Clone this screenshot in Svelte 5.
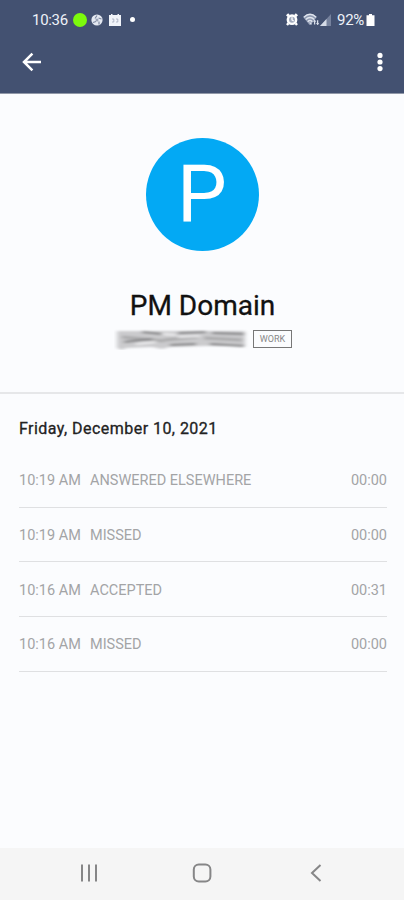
<script>
    const contact = {
        name: "PM Domain",
        initial: "P",
        label: "WORK"
    }

    const calls = [
        { id: 1, time: "10:19 AM", status: "ANSWERED ELSEWHERE", duration: "00:00" },
        { id: 2, time: "10:19 AM", status: "MISSED", duration: "00:00" },
        { id: 3, time: "10:16 AM", status: "ACCEPTED", duration: "00:31" },
        { id: 4, time: "10:16 AM", status: "MISSED", duration: "00:00" }
    ]
</script>

<div class="screen">
    <header class="header">
        <div class="status-bar">
            <div class="status-left">
                <span class="clock">10:36</span>
                <span class="green-dot"></span>
                <svg class="pinwheel" width="12" height="12" viewBox="0 0 12 12">
                    <circle cx="6" cy="6" r="5.6" fill="#e4e8f1" />
                    <path d="M6 1.5 4 4.5M10.5 5 7.5 4M8 10.5 8 7.5M2 8.5l3-1" stroke="#7c87a0" stroke-width="1.2" />
                    <circle cx="6" cy="6" r="1.5" fill="#9aa3b6" />
                </svg>
                <svg class="calendar" width="12" height="12" viewBox="0 0 12 12">
                    <path d="M0 1h2V0h1.5v1h5V0H10v1h2v11H0z" fill="#f1f4fa" />
                    <path d="M3 5h1.8v3H3M7 5h1.8v3H7" fill="none" stroke="#a3abbd" stroke-width=".8" />
                </svg>
                <span class="white-dot"></span>
            </div>
            <div class="status-right">
                <svg width="12" height="13" viewBox="0 0 12 13">
                    <path d="M.8 3.2 3 1.2M11.2 3.2 9 1.2M2.4 10.3 1 12M9.6 10.3 11 12" stroke="#fff" stroke-width="2.4" />
                    <circle cx="6" cy="6.7" r="4.2" fill="#9fa8bb" stroke="#fff" stroke-width="2.4" />
                    <path d="M6 4.2V7l1.7 1" fill="none" stroke="#fff" stroke-width="1.3" />
                </svg>
                <svg class="wifi" width="17" height="13" viewBox="0 0 17 13">
                    <path d="M.3 4.2Q7 -2.2 13.7 4.2L7.5 12h-1z" fill="#8d98b0" />
                    <path d="M.8 4.3Q7 -1.6 13.2 4.3M2.7 6.5Q7 2.4 11.3 6.5M4.7 8.7Q7 6.5 9.3 8.7" fill="none" stroke="#dfe4ee" stroke-width="1.4" />
                    <path d="M5.6 9.5h3L8.4 12z" fill="#d9dfeb" />
                    <path d="M11.6 7v4.5M14.6 11.8V7.3" stroke="#d9dfeb" stroke-width="1.3" />
                    <path d="m10 8.8 1.6-2 1.6 2zM13 10l1.6 2 1.6-2z" fill="#d9dfeb" />
                </svg>
                <svg class="signal" width="11" height="12" viewBox="0 0 11 12">
                    <path d="M0 12 11 0v12z" fill="#76829d" />
                    <path d="M0 12 6.5 5v7z" fill="#d5dbe7" />
                </svg>
                <span class="percent">92%</span>
                <svg class="battery" width="9" height="12" viewBox="0 0 9 12">
                    <path d="M3 0h3v1.2h2.5V12H.5V1.2H3z" fill="#fff" />
                </svg>
            </div>
        </div>
        <div class="toolbar">
            <svg width="20" height="20" viewBox="0 0 20 20">
                <path d="M10.4 1.6 2 10l8.4 8.4M2 10h17" fill="none" stroke="#fff" stroke-width="2.5" />
            </svg>
            <svg width="6" height="20" viewBox="0 0 6 20">
                <circle cx="3" cy="3.4" r="2.6" fill="#fff" />
                <circle cx="3" cy="10" r="2.6" fill="#fff" />
                <circle cx="3" cy="16.6" r="2.6" fill="#fff" />
            </svg>
        </div>
    </header>

    <section class="profile">
        <div class="avatar"><span class="initial">{contact.initial}</span></div>
        <h1 class="name">{contact.name}</h1>
        <div class="number-row">
            <!-- the phone number is smudged out -->
            <svg class="number" width="136" height="22" viewBox="0 0 136 22">
                <defs>
                    <filter id="smudge" x="-5%" y="-20%" width="110%" height="140%">
                        <feGaussianBlur stdDeviation="2 .9" />
                    </filter>
                </defs>
                <g filter="url(#smudge)">
                    <path d="M3 3h128v15H92l-36 1-8 2-10-2-26 1-4 2-5-2z" fill="#cbcbcd" />
                    <path d="M8 9l42 4M50 12l34-3M90 10l38 2" stroke="#aaaaac" stroke-width="3" />
                    <path d="M28 4l20 2M64 5l28-1M98 5l32 1M10 14l28-3M56 17l26-1M96 16l34 2" stroke="#7f7f81" stroke-width="2" />
                    <path d="M48 6l14 1M22 16l20-2M64 9l22-1" stroke="#eeeef0" stroke-width="2" />
                </g>
            </svg>
            <span class="label">{contact.label}</span>
        </div>
    </section>

    <section class="history">
        <h2 class="date">Friday, December 10, 2021</h2>
        <ul class="calls">
            {#each calls as call (call.id)}
                <li class="call">
                    <span class="time">{call.time}</span>
                    <span class="status">{call.status}</span>
                    <span class="duration">{call.duration}</span>
                </li>
            {/each}
        </ul>
    </section>

    <nav class="nav-bar">
        <svg width="20" height="20" viewBox="0 0 20 20">
            <path d="M3 1.5v17M10 1.5v17M17 1.5v17" stroke="#868687" stroke-width="2" />
        </svg>
        <svg width="20" height="20" viewBox="0 0 20 20">
            <rect x="1.8" y="1.6" width="16.6" height="16.8" rx="5" fill="none" stroke="#868687" stroke-width="2" />
        </svg>
        <svg width="20" height="20" viewBox="0 0 20 20">
            <path d="M14.5 2 6 10l8.5 8" fill="none" stroke="#868687" stroke-width="2" />
        </svg>
    </nav>
</div>

<style>
    :global(body) {
        margin: 0;
    }

    .screen {
        display: flex;
        flex-direction: column;
        width: 100%;
        height: 900px;
        overflow: hidden;
        background: #fbfcfe;
        font-family: Roboto, "Liberation Sans", sans-serif;
    }

    svg {
        display: block;
        flex: none;
    }

    .header {
        height: 94px;
        flex: none;
        background: #435171;
        border-bottom: 1px solid #9198a8;
        box-sizing: border-box;
        color: #eef1f8;
    }

    .status-bar {
        display: flex;
        justify-content: space-between;
        height: 39px;
        padding: 0 29px 0 32px;
    }

    .status-left,
    .status-right {
        display: flex;
        align-items: center;
    }

    .clock,
    .percent {
        font-size: 15px;
        line-height: 40px;
        padding-top: 1px;
    }

    .clock {
        width: 36px;
        letter-spacing: -0.3px;
    }

    .green-dot {
        width: 14px;
        height: 14px;
        margin-left: 5px;
        border-radius: 50%;
        background: #7cfa0c;
    }

    .pinwheel {
        margin-left: 4px;
    }

    .calendar {
        margin-left: 6px;
    }

    .white-dot {
        width: 5px;
        height: 5px;
        margin-left: 9px;
        border-radius: 50%;
        background: #fff;
    }

    .wifi {
        margin-left: 5px;
    }

    .percent {
        margin-left: 6px;
        width: 29px;
        letter-spacing: -0.3px;
    }

    .toolbar {
        display: flex;
        align-items: center;
        justify-content: space-between;
        height: 46px;
        padding: 0 21px 0 22px;
    }

    .profile {
        display: flex;
        flex-direction: column;
        align-items: center;
        height: 298px;
        padding-top: 44px;
        box-sizing: border-box;
        flex: none;
    }

    .avatar {
        display: flex;
        align-items: center;
        justify-content: center;
        width: 113px;
        height: 113px;
        border-radius: 50%;
        background: #03a9f4;
        color: #fff;
    }

    .initial {
        font-size: 79px;
        line-height: 113px;
    }

    .name {
        margin: 38px 0 0;
        font-size: 28px;
        font-weight: 400;
        line-height: 34px;
        padding-left: 1px;
        color: #111;
        -webkit-text-stroke: 0.3px #111;
    }

    .number-row {
        display: flex;
        align-items: center;
        gap: 3px;
        margin-top: 5px;
        padding-left: 2px;
    }

    .label {
        width: 39px;
        height: 18px;
        box-sizing: border-box;
        border: 1px solid #777;
        font-size: 9px;
        line-height: 16px;
        text-align: center;
        color: #888;
    }

    .history {
        flex: 1;
        border-top: 2px solid #e6e7e9;
        padding: 23px 17px 0 19px;
    }

    .date {
        margin: 0 0 12px;
        font-size: 16px;
        font-weight: 400;
        line-height: 24px;
        letter-spacing: 0.46px;
        color: #222;
        -webkit-text-stroke: 0.3px #222;
    }

    .calls {
        margin: 0;
        padding: 0;
        list-style: none;
    }

    .call {
        display: flex;
        align-items: center;
        height: 54.7px;
        padding-top: 2px;
        box-sizing: border-box;
        border-bottom: 1px solid #dfe0e2;
        font-size: 14.5px;
        color: #a3a4a6;
    }

    .time {
        width: 71px;
    }

    .duration {
        margin-left: auto;
    }

    .nav-bar {
        display: flex;
        align-items: center;
        justify-content: center;
        gap: 93.5px;
        height: 52px;
        padding: 0 0 3px;
        box-sizing: border-box;
        flex: none;
        background: #f5f5f5;
    }
</style>
